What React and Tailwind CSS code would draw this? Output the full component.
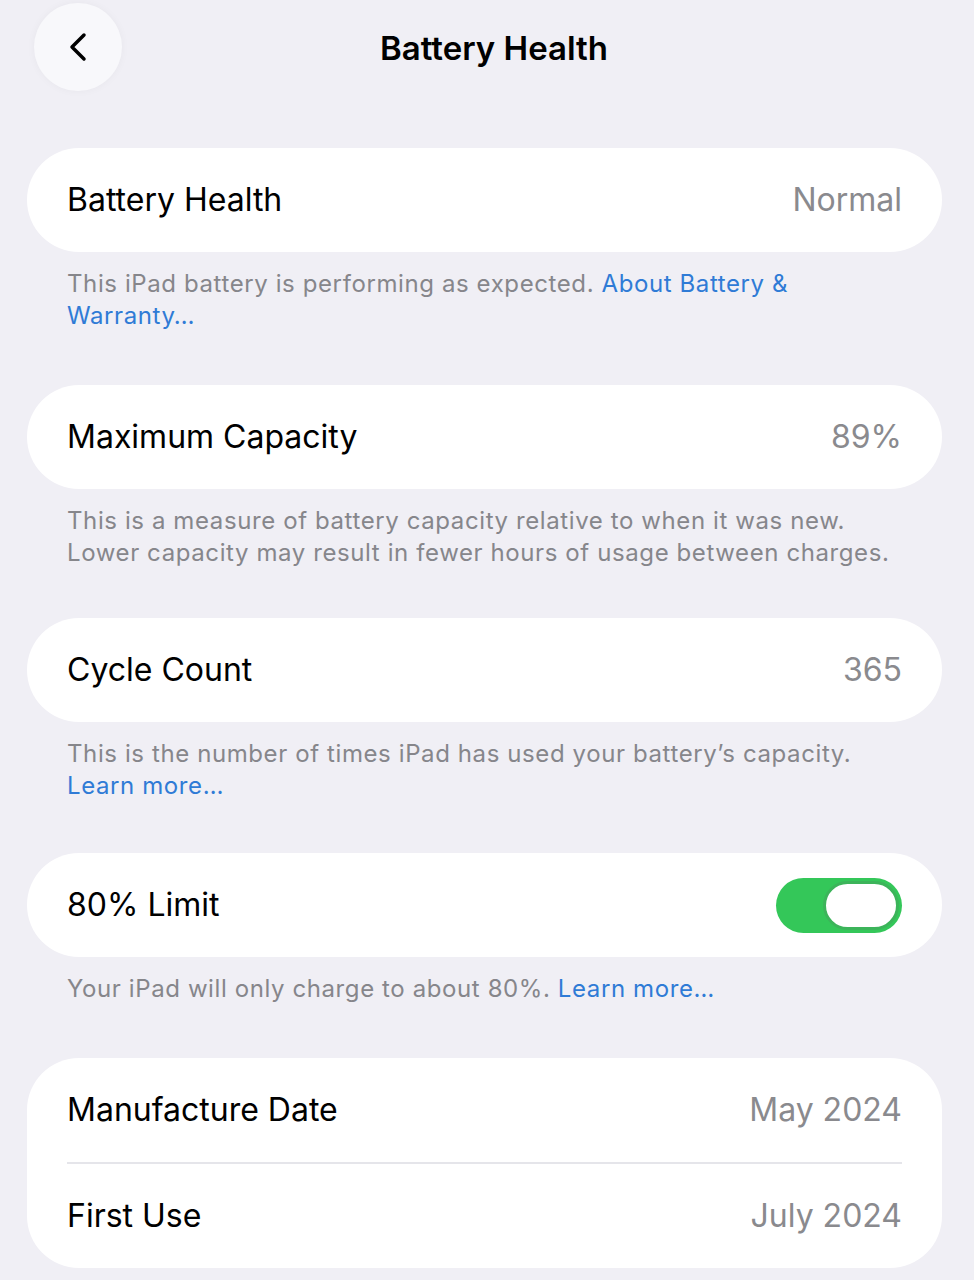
import { ChevronLeft } from "lucide-react";

const Row = ({ label, value, children }) => (
  <div className="flex h-[104px] items-center justify-between px-10">
    <span className="text-[32px] text-black">{label}</span>
    {value && <span className="text-[32px] text-[#8a8a8e]">{value}</span>}
    {children}
  </div>
);

const Card = ({ children }) => (
  <div className="mx-[27px] w-[915px] overflow-hidden rounded-[52px] bg-white">{children}</div>
);

const Footer = ({ children, className = "" }) => (
  <p className={`mt-4 px-[67px] text-[24px] leading-8 tracking-[0.6px] text-[#86868b] ${className}`}>{children}</p>
);

const Link = ({ children }) => <span className="text-[#2f7bd6]">{children}</span>;

const Toggle = () => (
  <div className="flex h-[55px] w-[126px] items-center justify-end rounded-full bg-[#34c759] p-[3px]">
    <div className="h-[49px] w-[76px] rounded-full border-[3px] border-[#3cb45a] bg-white" />
  </div>
);

export default function App() {
  return (
    <div className="min-h-screen w-[974px] bg-[#f0eff5] font-['Inter',sans-serif]">
      {/* nav bar */}
      <div className="relative flex h-[148px] items-start">
        <button className="mt-[3px] ml-[34px] flex h-[88px] w-[88px] items-center justify-center rounded-full bg-[#f8f8fb] shadow-[0_0_8px_rgba(0,0,0,0.04)]">
          <ChevronLeft className="h-12 w-12 text-black" strokeWidth={1.75} />
        </button>
        <h1 className="absolute left-0 right-0 top-[24px] pl-[14px] text-center text-[33px] font-semibold text-black">
          Battery Health
        </h1>
      </div>

      <Card>
        <Row label="Battery Health" value="Normal" />
      </Card>
      <Footer className="mb-[53px]">
        This iPad battery is performing as expected. <Link>About Battery &amp; Warranty…</Link>
      </Footer>

      <Card>
        <Row label="Maximum Capacity" value="89%" />
      </Card>
      <Footer className="mb-[49px]">
        This is a measure of battery capacity relative to when it was new. Lower capacity may result in fewer hours of
        usage between charges.
      </Footer>

      <Card>
        <Row label="Cycle Count" value="365" />
      </Card>
      <Footer className="mb-[51px]">
        This is the number of times iPad has used your battery’s capacity. <Link>Learn more…</Link>
      </Footer>

      <Card>
        <Row label="80% Limit">
          <Toggle />
        </Row>
      </Card>
      <Footer className="mb-[53px]">
        Your iPad will only charge to about 80%. <Link>Learn more…</Link>
      </Footer>

      <Card>
        <Row label="Manufacture Date" value="May 2024" />
        <div className="mx-10 h-[2px] bg-[#e5e5ea]" />
        <Row label="First Use" value="July 2024" />
      </Card>
    </div>
  );
}
